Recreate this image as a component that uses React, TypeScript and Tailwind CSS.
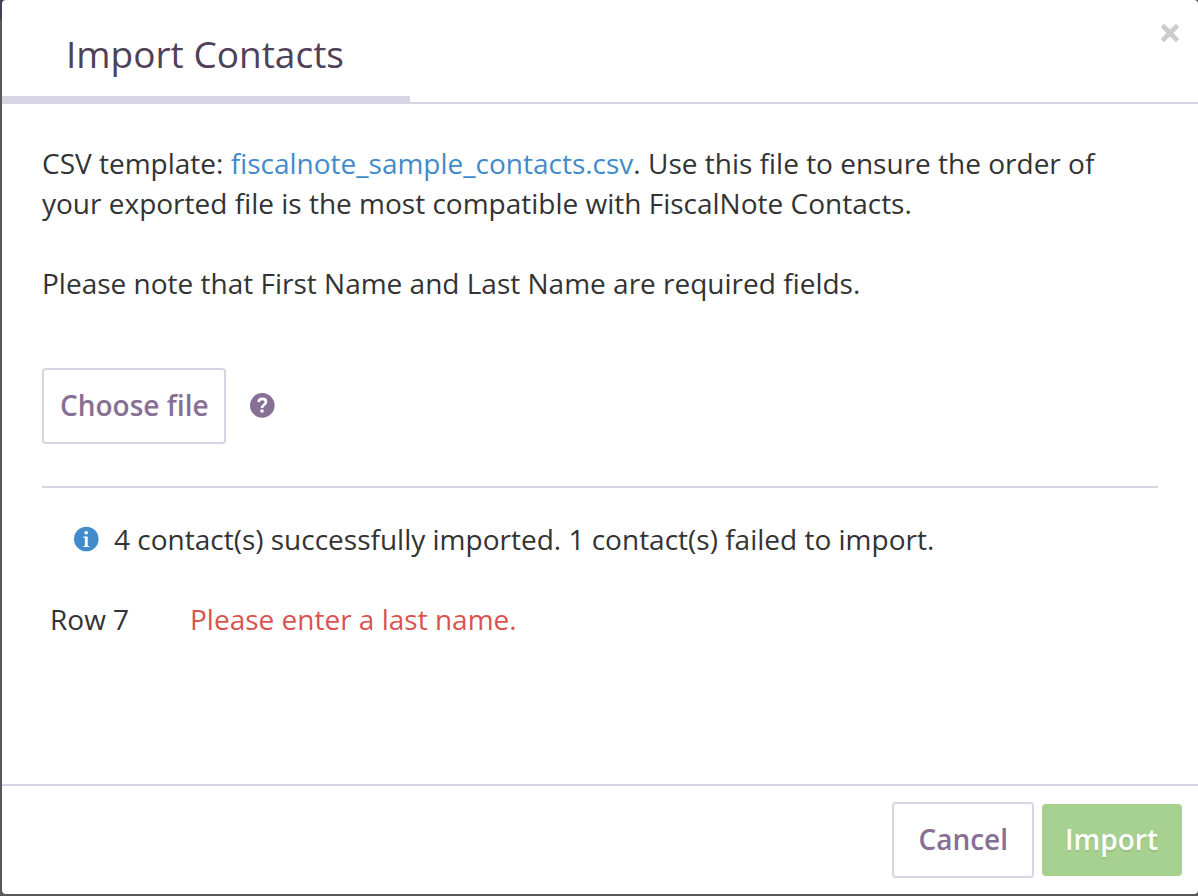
import React from "react";

const failedRows = [{ row: "Row 7", message: "Please enter a last name." }];

const CloseIcon = () => (
  <svg width="20" height="20" viewBox="0 0 20 20" aria-hidden="true">
    <path
      d="M4.6 1.2L10 6.5l5.4-5.3q.5-.4 1 0l2.4 2.4q.4.5 0 1L13.5 10l5.3 5.4q.4.5 0 1l-2.4 2.4q-.5.4-1 0L10 13.5l-5.4 5.3q-.5.4-1 0l-2.4-2.4q-.4-.5 0-1L6.5 10 1.2 4.6q-.4-.5 0-1l2.4-2.4q.5-.4 1 0z"
      fill="currentColor"
    />
  </svg>
);

const HelpIcon = () => (
  <svg width="26" height="26" viewBox="0 0 26 26" aria-hidden="true">
    <circle cx="12.3" cy="12.4" r="12.3" fill="currentColor" />
    <path
      d="M8.5 9.1C8.8 7 10.2 5.9 12.3 5.9c2.3 0 3.7 1.2 3.7 3 0 2.8-4 2.8-4 6.1"
      fill="none"
      stroke="#fff"
      strokeWidth="2.6"
    />
    <circle cx="12" cy="18" r="1.8" fill="#fff" />
  </svg>
);

const InfoIcon = () => (
  <svg width="26" height="26" viewBox="0 0 26 26" aria-hidden="true">
    <circle cx="12.3" cy="13" r="12.3" fill="currentColor" />
    <circle cx="12.2" cy="6.8" r="1.8" fill="#fff" />
    <path d="M9.3 10.6h4.4v8.8q0 .5 1.6.6v1H9.3v-1q1.6-.1 1.6-.6v-7.1q0-.6-1.6-.7z" fill="#fff" />
  </svg>
);

const App = () => {
  const handleSubmit = (event: any) => event.preventDefault();

  return (
    <div className="min-h-screen flex flex-col bg-[linear-gradient(#464052_20px,#58585b_20px)] pl-0.5 pb-0.5 font-['Open_Sans',sans-serif] text-[28px] leading-10 text-[#333333]">
      <form
        onSubmit={handleSubmit}
        role="dialog"
        aria-labelledby="import-title"
        className="grow flex flex-col bg-white rounded-sm"
      >
        <header className="flex items-start justify-between border-b-2 border-[#d7d4e4]">
          <h1
            id="import-title"
            className="-mb-0.5 w-[408px] border-b-8 border-[#d7d4e4] pl-16 pt-7 pb-4 text-[37px] leading-[52px] text-[#4f4158]"
          >
            Import Contacts
          </h1>
          <button type="button" aria-label="Close" className="flex pt-[23px] pr-[18px] text-[#cccccc]">
            <CloseIcon />
          </button>
        </header>

        <main className="grow px-10 pt-[39px]">
          <p>
            CSV template:{" "}
            <a href="#" className="text-[#428bca]">
              fiscalnote_sample_contacts.csv
            </a>
            . Use this file to ensure the order of your exported file is the most
            compatible with FiscalNote Contacts.
          </p>
          <p className="mt-10">
            Please note that First Name and Last Name are required fields.
          </p>

          <div className="mt-[65px] flex items-center gap-6 border-b-2 border-[#d7d4e4] pb-[42px]">
            <button
              type="button"
              className="border-2 border-[#d7d4e4] rounded-sm pl-4 pr-[15px] pt-[15px] pb-[17px] font-semibold text-[#876f95]"
            >
              Choose file
            </button>
            <button type="button" aria-label="Help" className="text-[#876f95]">
              <HelpIcon />
            </button>
          </div>

          <div className="mt-[31px] flex items-center gap-3.5 pl-8">
            <span className="text-[#428bca]">
              <InfoIcon />
            </span>
            <p>4 contact(s) successfully imported. 1 contact(s) failed to import.</p>
          </div>

          <table className="mt-10">
            <tbody>
              {failedRows.map(({ row, message }) => (
                <tr key={row}>
                  <th scope="row" className="w-[140px] pl-2 text-left font-normal">
                    {row}
                  </th>
                  <td className="pl-2 text-[#d9534f]">{message}</td>
                </tr>
              ))}
            </tbody>
          </table>
        </main>

        <footer className="flex items-center justify-end gap-2 border-t-2 border-[#d7d4e4] p-4 font-semibold">
          <button
            type="button"
            className="border-2 border-[#d7d4e4] rounded-sm px-6 pt-[15px] pb-[17px] text-[#876f95]"
          >
            Cancel
          </button>
          <button
            type="submit"
            className="rounded-sm bg-[#a7d191] pl-[23px] pr-6 pt-[15px] pb-[17px] text-white text-shadow-[0_2px_2px_rgb(0_0_0/0.1)]"
          >
            Import
          </button>
        </footer>
      </form>
    </div>
  );
};

export default App;
